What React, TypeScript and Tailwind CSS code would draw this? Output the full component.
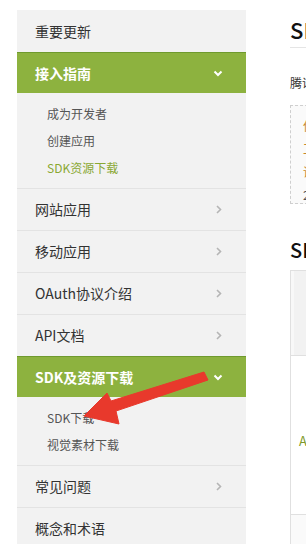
import React from "react";

const Right = () => (
  <svg width="6" height="9" viewBox="0 0 6 9" className="shrink-0">
    <path d="M1 1 L4.5 4.5 L1 8" fill="none" stroke="#b5b5b5" strokeWidth="1.6" />
  </svg>
);
const Down = () => (
  <svg width="10" height="7" viewBox="0 0 10 7" className="shrink-0">
    <path d="M1.5 1.5 L5 5 L8.5 1.5" fill="none" stroke="#ffffff" strokeWidth="2" />
  </svg>
);

const Item = ({ label }: { label: string }) => (
  <div className="h-[42px] border-t border-[#e3e3e3] flex items-center justify-between pl-[18px] pr-[24px] text-[14px] text-[#333]">
    <span>{label}</span>
    <Right />
  </div>
);

const Active = ({ label }: { label: string }) => (
  <div className="h-[41px] bg-[#8db23f] border-t border-[#6f9a2e] flex items-center justify-between pl-[18px] pr-[23px] text-[14px] text-white font-bold">
    <span>{label}</span>
    <Down />
  </div>
);

const Sub = ({ items, active }: { items: string[]; active?: number }) => (
  <div className="py-[7px] flex flex-col">
    {items.map((t, i) => (
      <div
        key={t}
        className={`h-[27px] flex items-center pl-[30px] text-[12px] ${i === active ? "text-[#8aa832]" : "text-[#555]"}`}
      >
        {t}
      </div>
    ))}
  </div>
);

export default function App() {
  return (
    <div
      className="relative w-[306px] h-[544px] overflow-hidden bg-white flex"
      style={{ fontFamily: '"Noto Sans CJK SC", "Noto Sans", sans-serif' }}
    >
      <div className="ml-[17px] mt-[10px] w-[229px] shrink-0 bg-[#f2f2f2] flex flex-col h-[600px]">
        <div className="h-[42px] flex items-center pl-[18px] text-[14px] text-[#333]">重要更新</div>
        <Active label="接入指南" />
        <Sub items={["成为开发者", "创建应用", "SDK资源下载"]} active={2} />
        <Item label="网站应用" />
        <Item label="移动应用" />
        <Item label="OAuth协议介绍" />
        <Item label="API文档" />
        <Active label="SDK及资源下载" />
        <Sub items={["SDK下载", "视觉素材下载"]} />
        <Item label="常见问题" />
        <div className="h-[42px] border-t border-[#e3e3e3] flex items-center pl-[18px] text-[14px] text-[#333]">概念和术语</div>
      </div>

      <div className="ml-[44px] w-[500px] shrink-0 flex flex-col">
        <div className="mt-[16px] text-[22px] leading-[26px] text-[#111] font-medium">SDK下载</div>
        <div className="mt-[5px] border-b border-[#e5e5e5]"></div>
        <div className="mt-[27px] text-[12px] leading-[16px] text-[#333]">腾讯开放平台提供以下SDK下载</div>
        <div className="mt-[14px] h-[112px] border border-dashed border-[#cfcfcf] bg-[#fafafa] pl-[12px] pt-[12px] flex flex-col gap-[7px] text-[12px] leading-[16px] text-[#c8872a]">
          <div>使用说明</div>
          <div>工具下载</div>
          <div>请根据平台选择</div>
          <div className="text-[#555]">2</div>
        </div>
        <div className="mt-[34px] text-[20px] leading-[24px] text-[#111] font-medium">SDK列表</div>
        <div className="mt-[8px] border border-[#e0e0e0] flex flex-col">
          <div className="h-[84px] bg-[#f2f2f2] border-l-[3px] border-[#f8f8f8]"></div>
          <div className="h-[159px] border-t border-[#e0e0e0] flex items-start pt-[76px] pl-[8px] text-[13px] leading-[18px] text-[#7e9a2a]">Android</div>
          <div className="h-[40px] border-t border-[#e0e0e0] bg-[#fafafa]"></div>
        </div>
      </div>

      <svg className="absolute left-0 top-0 pointer-events-none" width="306" height="544" viewBox="0 0 306 544">
        <path
          d="M204 372 L208 380 L116 411 L119 424 L84 416 L107 393 L111 401 Z"
          fill="#e8392c"
          stroke="#e8392c"
          strokeWidth="1"
          strokeLinejoin="round"
        />
      </svg>
    </div>
  );
}
